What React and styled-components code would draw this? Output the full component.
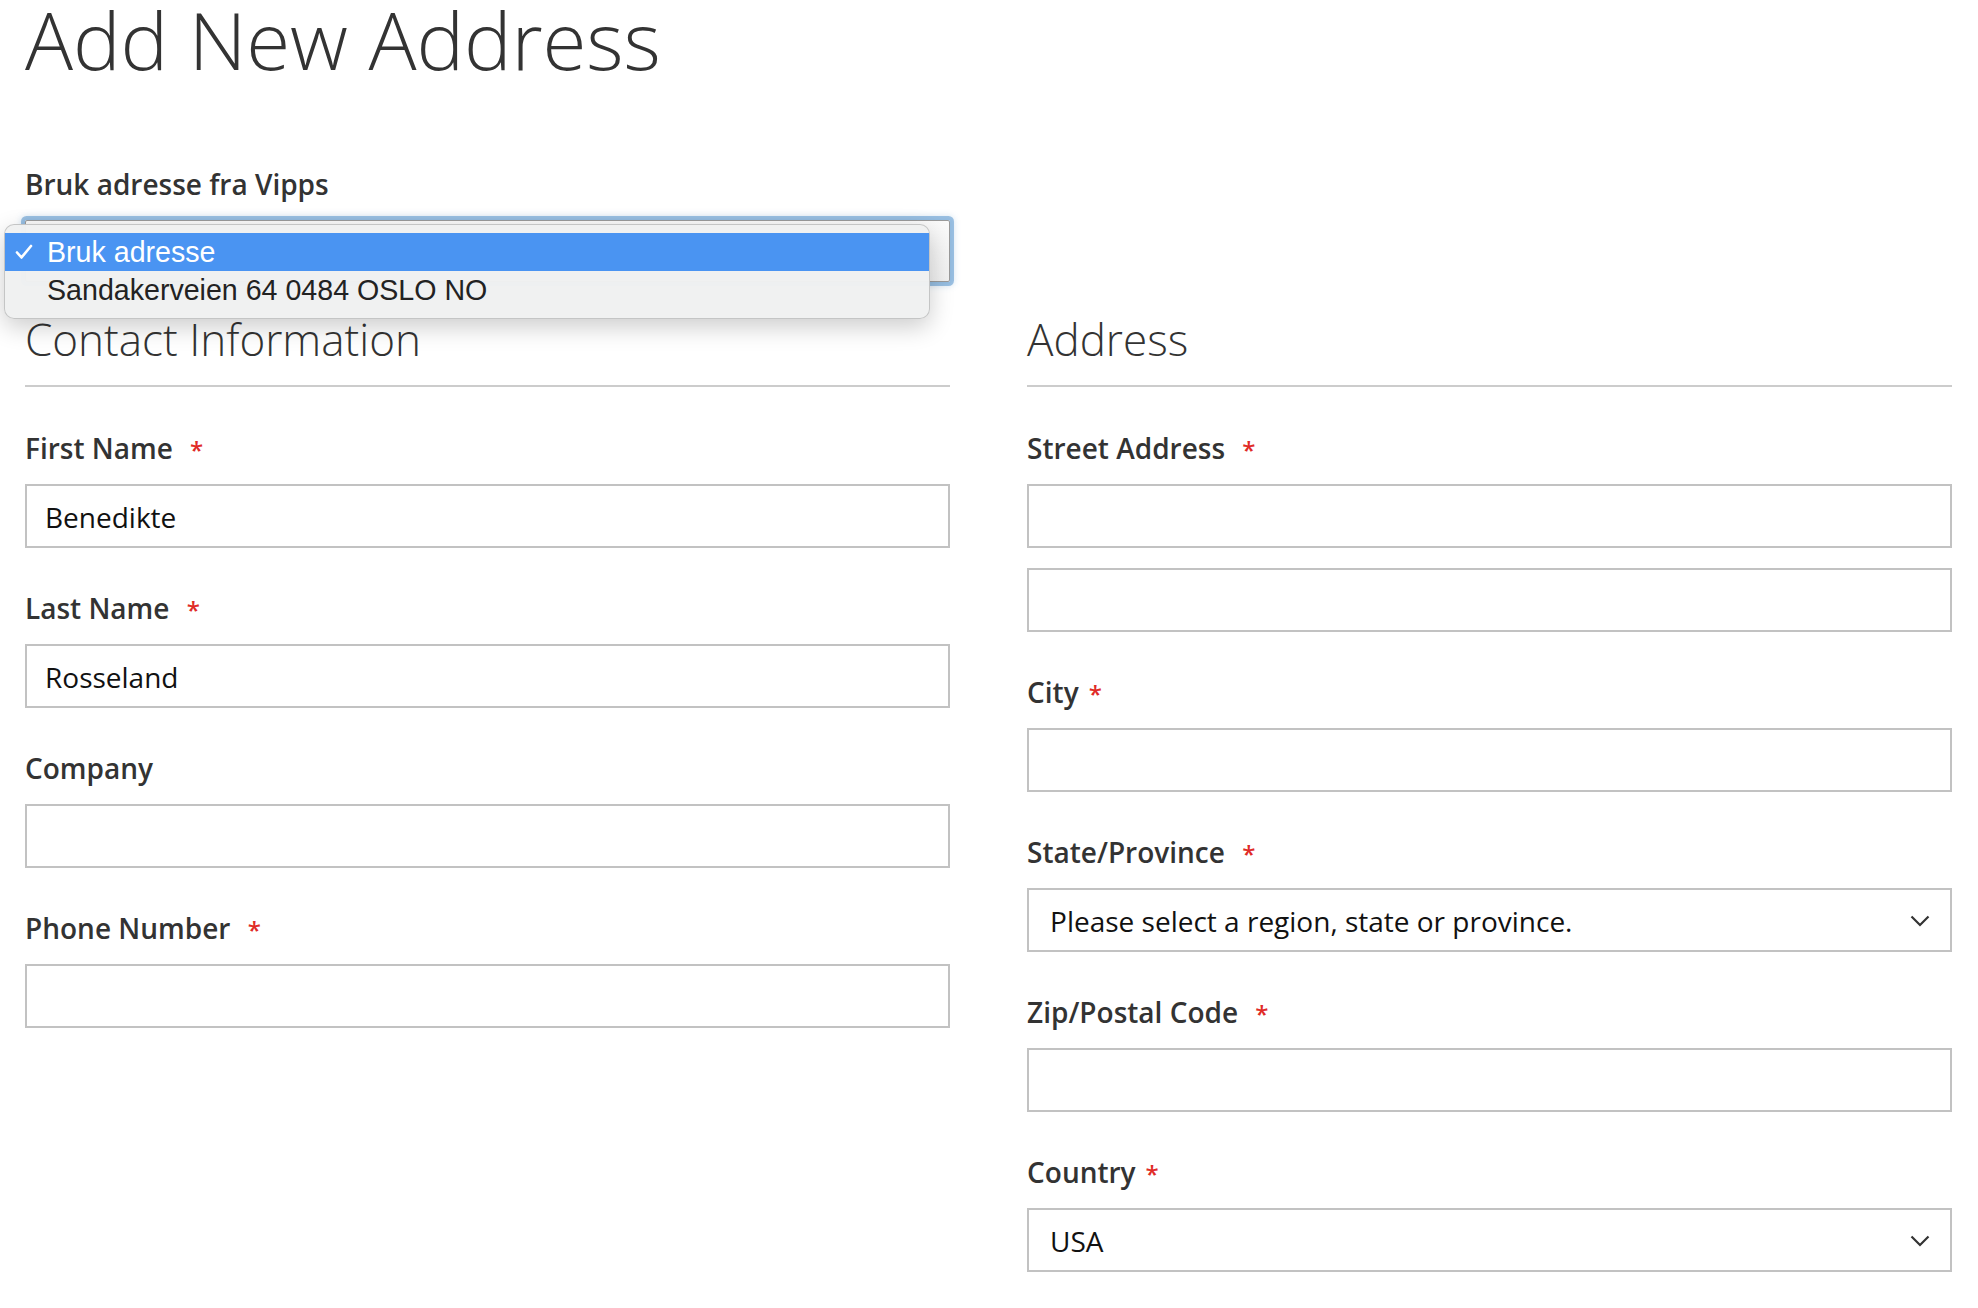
import React from 'react';
import styled, { createGlobalStyle } from 'styled-components';

const GlobalStyle = createGlobalStyle`
  html, body { margin: 0; padding: 0; background: #fff; }
  body { font-family: "Open Sans", "Liberation Sans", sans-serif; color: #333; }
  *, *::before, *::after { box-sizing: border-box; }
`;

const Page = styled.div`
  min-height: 1308px;
  display: flex;
  flex-direction: column;
`;

const Main = styled.main`
  flex: 1;
  padding: 0 26px 0 25px;
`;

const Title = styled.h1`
  margin: -1px 0 0;
  font-size: 80px;
  font-weight: 300;
  line-height: 80px;
  color: #333;
  letter-spacing: -0.1px;
`;

const VippsBlock = styled.div`
  width: 48%;
  margin-top: 85px;
`;

const SelectWrap = styled.div`
  position: relative;
`;

const FocusedSelect = styled.div`
  height: 62px;
  border: 1px solid #9a9a9a;
  background: linear-gradient(#fafafa, #f0f0f0);
  border-radius: 2px;
  box-shadow: 0 0 0 4px rgba(88, 150, 206, 0.55), 0 0 6px 4px rgba(88, 150, 206, 0.25);
`;

const Menu = styled.ul`
  position: absolute;
  left: -21px;
  top: 4px;
  width: 926px;
  margin: 0;
  padding: 8px 0 9px;
  list-style: none;
  background: rgba(240, 241, 241, 0.98);
  border: 1px solid rgba(0, 0, 0, 0.18);
  border-radius: 10px;
  box-shadow: 0 8px 24px rgba(0, 0, 0, 0.2);
  font-family: "Liberation Sans", Arial, sans-serif;
  z-index: 5;
`;

const MenuItem = styled.li`
  position: relative;
  height: 38px;
  padding-left: 42px;
  display: flex;
  align-items: center;
  font-size: 28.6px;
  color: ${p => (p.$active ? '#fff' : '#222')};
  background: ${p => (p.$active ? '#4a94f2' : 'transparent')};
`;

const Check = styled.svg`
  position: absolute;
  left: 10px;
  top: 11px;
  width: 18px;
  height: 16px;
`;

const Columns = styled.div`
  display: grid;
  grid-template-columns: 48% 48%;
  justify-content: space-between;
  margin-top: 33px;
`;

const Fieldset = styled.section``;

const Legend = styled.h2`
  margin: 0 0 41px;
  padding-bottom: 22px;
  border-bottom: 2px solid #cccccc;
  font-size: 44px;
  font-weight: 300;
  line-height: 48px;
  color: #333;
`;

const Field = styled.div`
  margin-bottom: 40px;
`;

const Label = styled.label`
  display: block;
  height: 40px;
  margin-bottom: 16px;
  font-size: 28px;
  font-weight: 600;
  line-height: 40px;
  color: #333;
  white-space: pre;
`;

const Req = styled.span`
  margin-left: 10px;
  color: #e02b27;
  font-size: 24px;
  font-weight: 600;
  line-height: 1;
`;

const Input = styled.div`
  height: 64px;
  border: 2px solid #c2c2c2;
  background: #fff;
  padding: 2px 18px 0;
  display: flex;
  align-items: center;
  font-size: 28px;
  color: #111;
  & + & { margin-top: 20px; }
`;

const SelectBox = styled(Input)`
  justify-content: space-between;
  padding-left: 21px;
  padding-right: 20px;
`;

const Chevron = styled.svg`
  width: 20px;
  height: 12px;
`;

const Footer = styled.footer`
  height: 36px;
  background: linear-gradient(#fdfdfd, #f6f6f6);
`;

const ChevronIcon = () => (
  <Chevron viewBox="0 0 20 12">
    <polyline points="1.5,1.5 10,10 18.5,1.5" fill="none" stroke="#333" strokeWidth="2.2" />
  </Chevron>
);

const FormField = ({ label, required, children }) => (
  <Field>
    <Label>
      {label}
      {required && <Req>*</Req>}
    </Label>
    {children}
  </Field>
);

export default function App() {
  return (
    <Page>
      <GlobalStyle />
      <Main>
        <Title>Add New Address</Title>
        <VippsBlock>
          <Label>Bruk adresse fra Vipps</Label>
          <SelectWrap>
            <FocusedSelect />
            <Menu>
              <MenuItem $active>
                <Check viewBox="0 0 18 16">
                  <polyline points="2,8.5 6.5,13.5 16,2" fill="none" stroke="#fff" strokeWidth="2.6" strokeLinecap="round" strokeLinejoin="round" />
                </Check>
                Bruk adresse
              </MenuItem>
              <MenuItem>Sandakerveien 64 0484 OSLO NO</MenuItem>
            </Menu>
          </SelectWrap>
        </VippsBlock>
        <Columns>
          <Fieldset>
            <Legend>Contact Information</Legend>
            <FormField label="First Name " required>
              <Input>Benedikte</Input>
            </FormField>
            <FormField label="Last Name " required>
              <Input>Rosseland</Input>
            </FormField>
            <FormField label="Company">
              <Input />
            </FormField>
            <FormField label="Phone Number " required>
              <Input />
            </FormField>
          </Fieldset>
          <Fieldset>
            <Legend>Address</Legend>
            <FormField label="Street Address " required>
              <Input />
              <Input />
            </FormField>
            <FormField label="City" required>
              <Input />
            </FormField>
            <FormField label="State/Province " required>
              <SelectBox>
                Please select a region, state or province.
                <ChevronIcon />
              </SelectBox>
            </FormField>
            <FormField label="Zip/Postal Code " required>
              <Input />
            </FormField>
            <FormField label="Country" required>
              <SelectBox>
                USA
                <ChevronIcon />
              </SelectBox>
            </FormField>
          </Fieldset>
        </Columns>
      </Main>
      <Footer />
    </Page>
  );
}
